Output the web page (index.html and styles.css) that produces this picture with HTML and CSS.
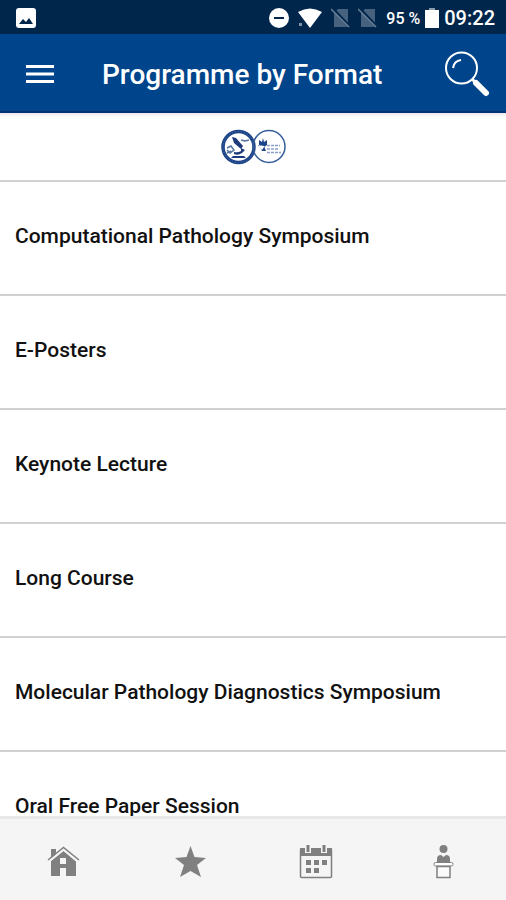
FILE: index.html
```html
<!DOCTYPE html>
<html lang="en">
<head>
<meta charset="utf-8">
<meta name="viewport" content="width=device-width, initial-scale=1">
<title>Programme by Format</title>
<link rel="stylesheet" href="styles.css">
</head>
<body>
<div class="status">
  <svg class="status-photo" width="20" height="20" viewBox="0 0 20 20" aria-hidden="true"><rect width="20" height="20" rx="3" fill="#fff"/><path d="M3 16l4-5 3 3 3-4 4 6z" fill="#00264c"/></svg>
  <div class="status-icons">
    <svg width="20" height="20" viewBox="0 0 20 20" aria-hidden="true"><circle cx="10" cy="10" r="10" fill="#fff"/><path d="M5 10h10" stroke="#00264c" stroke-width="2"/></svg>
    <svg width="26" height="20" viewBox="0 0 26 20" aria-hidden="true"><path d="M1 4Q13-3 25 4L13 20 7 12z" fill="#fff"/><path d="M2 15h3v3H2z" fill="#7f93a6"/></svg>
    <svg width="19" height="20" viewBox="0 0 19 20" aria-hidden="true"><path d="M7 1h10v18H3V5z" fill="#46627f"/><path d="M1 0l18 19" stroke="#00264c" stroke-width="3"/><path d="M0 1l18 18" stroke="#6c8299" stroke-width="1.500"/></svg>
    <svg width="19" height="20" viewBox="0 0 19 20" aria-hidden="true"><path d="M7 1h10v18H3V5z" fill="#46627f"/><path d="M1 0l18 19" stroke="#00264c" stroke-width="3"/><path d="M0 1l18 18" stroke="#6c8299" stroke-width="1.500"/></svg>
  </div>
  <span class="battery-text">95 %</span>
  <svg class="battery" width="14" height="20" viewBox="0 0 14 20" aria-hidden="true"><path d="M0 2h14v18H0z" fill="#fff"/><path d="M4 0h6v2H4z" fill="#8a9bad"/></svg>
  <span class="clock">09:22</span>
</div>
<header class="bar">
  <button class="icon-button" type="button" aria-label="Menu">
    <svg width="28" height="20" viewBox="0 0 28 20"><path d="M0 2.500h28M0 10h28M0 17.500h28" stroke="#fff" stroke-width="3"/></svg>
  </button>
  <h1 class="title">Programme by Format</h1>
  <button class="icon-button" type="button" aria-label="Search">
    <svg width="46" height="46" viewBox="0 0 46 46" fill="none" stroke="#fff"><circle cx="17.500" cy="17" r="15.500" stroke-width="2"/><path d="M9 17q1-7 8-8" stroke-width="2"/><path d="M28 28l4 4" stroke-width="3"/><path d="M32 32l10 10" stroke-width="6" stroke-linecap="round"/></svg>
  </button>
</header>
<main class="content">
  <div class="brand">
    <svg width="66" height="38" viewBox="0 0 66 38" role="img" aria-label="Society logos">
      <circle cx="18.500" cy="19" r="15.500" fill="#fff" stroke="#1d4388" stroke-width="3.500"/>
      <circle cx="18.500" cy="19" r="15.500" fill="none" stroke="#5577b0" stroke-width="1" stroke-dasharray="1 2"/>
      <path d="M12 9l4 1 7 8-2 3-7-6zM21 20l4 2-3 3q-4 3-8 1v-2q4 1 7-1zM13 28h11l2 2H11z" fill="#1d3b7c"/>
      <path d="M7 20l4-2 3 4-4 3-3-3M21 12l4 1 4-1M7 25l4-2" fill="none" stroke="#55739f" stroke-width="1.500"/>
      <circle cx="49" cy="18.500" r="16" fill="none" stroke="#345c99" stroke-width="1.500"/>
      <path d="M39 12l3 2 1-4 1 4 3-2v5l-3 2-2 3-3-3zM38 17l4 6h4l-2-5z" fill="#1d4388"/>
      <path d="M47 17.500h13M47 21h11M47 24.500h14" stroke="#8aa0c8" stroke-width="1.500" stroke-dasharray="3 1"/>
    </svg>
  </div>
  <ul class="list">
    <li><a href="#computational">Computational Pathology Symposium</a></li>
    <li><a href="#e-posters">E-Posters</a></li>
    <li><a href="#keynote">Keynote Lecture</a></li>
    <li><a href="#long-course">Long Course</a></li>
    <li><a href="#molecular">Molecular Pathology Diagnostics Symposium</a></li>
    <li><a href="#oral">Oral Free Paper Session</a></li>
  </ul>
</main>
<nav class="tabs">
  <a href="#home" aria-label="Home">
    <svg width="34" height="34" viewBox="0 0 34 34"><path d="M5 4h5v5l-5 5z" fill="#808080"/><path d="M5 16L17.500 6 30 16v15H20v-8h-6v8H5zM14 13v6h6v-6z" fill="#808080" fill-rule="evenodd"/><path d="M2 17L17.500 4.500 32 17" fill="none" stroke="#f5f5f5" stroke-width="2"/><path d="M2 15L17.500 2.500 33 15" fill="none" stroke="#808080" stroke-width="1.500"/></svg>
  </a>
  <a href="#favourites" aria-label="Favourites">
    <svg width="34" height="34" viewBox="0 0 34 34"><path d="M17.500 1l4 11 11.500 1-9 7 4 12-10.500-6L7 32l4-12-9-7 11.500-1z" fill="#808080"/></svg>
  </a>
  <a href="#calendar" aria-label="Calendar">
    <svg width="34" height="34" viewBox="0 0 34 34"><rect x="1.500" y="4" width="31" height="28.500" rx="1" fill="none" stroke="#808080" stroke-width="1.500"/><path d="M1 3h32v8H1zM7 15h5v5H7zM15 15h5v5h-5zM23 15h5v5h-5zM7 23h5v5H7zM15 23h5v5h-5z" fill="#808080"/><path d="M9 0v8M25 0v8" stroke="#f5f5f5" stroke-width="6"/><path d="M9 0v7M25 0v7" stroke="#808080" stroke-width="3"/></svg>
  </a>
  <a href="#speakers" aria-label="Speakers">
    <svg width="34" height="34" viewBox="0 0 34 34"><circle cx="17.500" cy="4" r="4" fill="#808080"/><path d="M11 17v-3q0-4 4-4l2.500 2 2.500-2q4 0 4 4v3z" fill="#808080"/><rect x="8" y="17.500" width="19" height="3.500" rx="1.500" fill="#fff" stroke="#808080"/><path d="M11 21.500h13v11H11z" fill="#fafafa" stroke="#808080" stroke-width="1.500"/></svg>
  </a>
</nav>
</body>
</html>
```
FILE: styles.css
```css
* {
  box-sizing: border-box;
}

body {
  margin: 0;
  height: 100vh;
  display: flex;
  flex-direction: column;
  background: #fff;
  color: #111;
  font-family: Roboto, "Liberation Sans", sans-serif;
}

svg {
  display: block;
}

.status {
  flex: none;
  height: 34px;
  padding: 2px 11px 0 16px;
  display: flex;
  align-items: center;
  background: #00264c;
  color: #fff;
  font-weight: 500;
}

.status-photo {
  margin-right: auto;
}

.status-icons {
  display: flex;
  gap: 8px;
  margin-right: 9px;
}

.battery-text {
  font-size: 16px;
}

.battery {
  margin: 0 5px;
}

.clock {
  font-size: 20px;
  line-height: 24px;
}

.bar {
  flex: none;
  height: 79px;
  padding: 2px 16px 0 26px;
  display: flex;
  align-items: center;
  background: #00458b;
  border-bottom: 2px solid #003375;
  color: #fff;
}

.icon-button {
  padding: 0;
  border: 0;
  background: none;
  cursor: pointer;
}

.title {
  flex: 1;
  margin: 0 0 0 48px;
  padding-top: 2px;
  font-size: 28px;
  line-height: 32px;
  font-weight: 500;
}

.content {
  flex: 1;
  min-height: 0;
  overflow-y: auto;
  scrollbar-width: none;
}

.brand {
  height: 69px;
  display: flex;
  align-items: center;
  justify-content: center;
  background: linear-gradient(#e8e8ec, #fff 4px);
  border-bottom: 2px solid #d0d0d0;
}

.list {
  margin: 0;
  padding: 0;
  list-style: none;
}

.list a {
  height: 114px;
  padding: 0 15px 5px;
  display: flex;
  align-items: center;
  border-bottom: 2px solid #d0d0d0;
  color: inherit;
  text-decoration: none;
  font-size: 21px;
  line-height: 24px;
  font-weight: 500;
}

.tabs {
  flex: none;
  height: 84px;
  padding-top: 4px;
  display: flex;
  border-top: 3px solid #e8e8e8;
  background: #f5f5f5;
}

.tabs a {
  flex: 1;
  display: flex;
  align-items: center;
  justify-content: center;
}
```
